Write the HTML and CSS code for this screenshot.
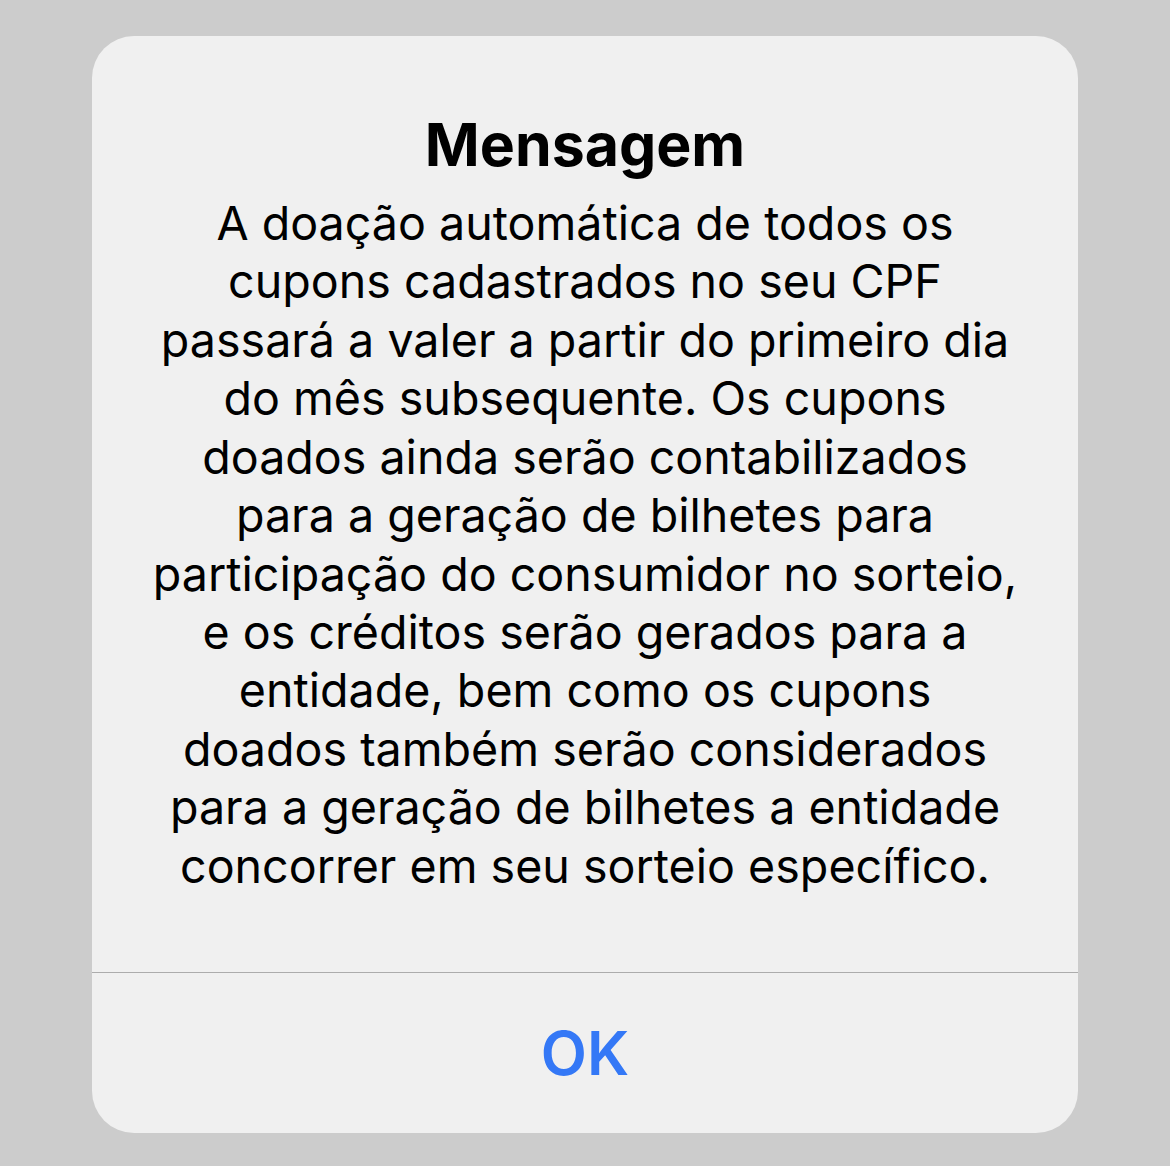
FILE: index.html
```html
<!DOCTYPE html>
<html lang="pt-BR">
<head>
<meta charset="utf-8">
<link rel="stylesheet" href="styles.css">
</head>
<body>
<div class="screen">
  <div class="alert">
    <div class="alert-content">
      <h1 class="alert-title">Mensagem</h1>
      <p class="alert-message">A doação automática de todos os<br>cupons cadastrados no seu CPF<br>passará a valer a partir do primeiro dia<br>do mês subsequente. Os cupons<br>doados ainda serão contabilizados<br>para a geração de bilhetes para<br>participação do consumidor no sorteio,<br>e os créditos serão gerados para a<br>entidade, bem como os cupons<br>doados também serão considerados<br>para a geração de bilhetes a entidade<br>concorrer em seu sorteio específico.</p>
    </div>
    <div class="alert-actions">
      <button class="alert-button">OK</button>
    </div>
  </div>
</div>
</body>
</html>
```
FILE: styles.css
```css
html, body {
  margin: 0;
  padding: 0;
  background: #cccccc;
}
.screen {
  width: 1170px;
  height: 1166px;
  display: flex;
  justify-content: center;
  align-items: flex-start;
  padding-top: 36px;
  box-sizing: border-box;
  font-family: Inter, "Noto Sans", sans-serif;
}
.alert {
  width: 986px;
  height: 1097px;
  background: #f0f0f0;
  border-radius: 42px;
  display: flex;
  flex-direction: column;
  overflow: hidden;
}
.alert-content {
  flex: 1;
  padding-top: 73px;
  text-align: center;
  color: #000;
}
.alert-title {
  margin: 0;
  font-size: 59px;
  line-height: 72px;
  font-weight: 700;
  letter-spacing: 0;
}
.alert-message {
  margin: 12.8px 0 0;
  font-size: 46.6px;
  line-height: 58.45px;
  font-weight: 400;
  white-space: nowrap;
}
.alert-actions {
  height: 160px;
  border-top: 1px solid #acacac;
  display: flex;
  align-items: center;
  justify-content: center;
}
.alert-button {
  border: 0;
  background: transparent;
  padding: 0;
  font-family: Inter, "Noto Sans", sans-serif;
  font-size: 60px;
  font-weight: 600;
  color: #3478f6;
  cursor: pointer;
}
```
